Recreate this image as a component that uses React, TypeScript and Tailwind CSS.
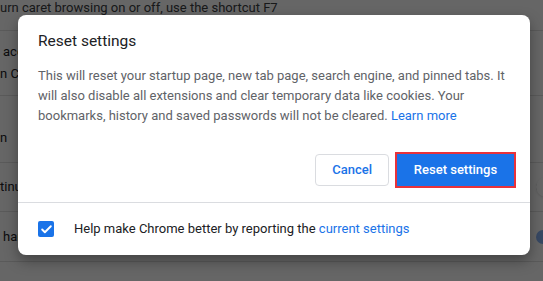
import { Check } from 'lucide-react';

function Toggle({ on }: { on: boolean }) {
    return (
        <div className="relative w-[34px] h-[14px] mr-[10px]">
            <div className={`absolute inset-0 rounded-full ${on ? 'bg-[#8ab4f8]' : 'bg-[#bdc1c6]'}`} />
            <div
                className={`absolute top-[-3px] w-[20px] h-[20px] rounded-full shadow ${on ? 'right-0 bg-[#1a73e8]' : 'left-0 bg-white'}`}
            />
        </div>
    );
}

// only the strip left of the dialog is visible, so clip the row labels there
function Peek({ children, className = '' }: { children: string; className?: string }) {
    return <span className={`w-[18px] overflow-hidden whitespace-nowrap ${className}`}>{children}</span>;
}

export default function App() {
    return (
        <div className="relative w-[543px] h-[281px] overflow-hidden bg-white font-['Roboto',sans-serif] text-[13px]">
            {/* Settings page behind the dialog */}
            <div className="w-[580px] flex flex-col text-[#202124] text-[13px]">
                <div className="h-[31px] border-b border-[#e0e0e0] flex items-start leading-[15px]">
                    <span className="text-[#3c4043]">urn caret browsing on or off, use the shortcut F7</span>
                </div>
                <div className="h-[65px] border-b border-[#e0e0e0] flex flex-col justify-center gap-[2px] leading-[20px]">
                    <Peek className="pl-[3px]">accessibility</Peek>
                    <Peek>n Chrome</Peek>
                </div>
                <div className="h-[67px] border-b border-[#e0e0e0] flex items-end pb-[15px]">
                    <Peek>n</Peek>
                </div>
                <div className="h-[49px] border-b border-[#e0e0e0] flex items-center justify-between">
                    <Peek>tinue</Peek>
                    <Toggle on={false} />
                </div>
                <div className="h-[50px] border-b border-[#e0e0e0] flex items-center justify-between">
                    <Peek className="pl-[3px]">hardware</Peek>
                    <Toggle on={true} />
                </div>
                <div className="h-[30px]" />
            </div>

            {/* Dim overlay */}
            <div className="absolute inset-0 bg-black/60" />

            {/* Dialog */}
            <div className="absolute left-[18px] top-[15px] w-[512px] h-[240px] bg-white rounded-[8px] shadow-[0_6px_14px_rgba(0,0,0,0.35)] flex flex-col">
                <div className="px-[20px] pt-[16px]">
                    <h2 className="text-[15.5px] leading-[20px] text-[#202124]">Reset settings</h2>
                    <p className="mt-[15px] text-[13px] leading-[20px] text-[#5f6368]">
                        This will reset your startup page, new tab page, search engine, and pinned tabs. It
                        <br />
                        will also disable all extensions and clear temporary data like cookies. Your
                        <br />
                        bookmarks, history and saved passwords will not be cleared.{' '}
                        <a className="text-[#1a73e8]">Learn more</a>
                    </p>
                </div>
                <div className="flex justify-end gap-[8px] px-[16px] pt-[28px] pb-[16px]">
                    <button className="h-[32px] px-[16px] rounded-[4px] border border-[#dadce0] bg-white text-[#1a73e8] text-[13px] font-medium">
                        Cancel
                    </button>
                    <button className="h-[32px] w-[117px] bg-[#1a73e8] text-white text-[13px] font-medium outline-2 outline-[#e8323a]">
                        Reset settings
                    </button>
                </div>
                <div className="flex-1 border-t border-[#dadce0] flex items-center px-[20px] gap-[20px]">
                    <div className="w-[16px] h-[16px] rounded-[2px] bg-[#1a73e8] flex items-center justify-center">
                        <Check className="w-[13px] h-[13px] text-white" strokeWidth={3.5} />
                    </div>
                    <span className="text-[13px] text-[#202124]">
                        Help make Chrome better by reporting the <a className="text-[#1a73e8]">current settings</a>
                    </span>
                </div>
            </div>
        </div>
    );
}
